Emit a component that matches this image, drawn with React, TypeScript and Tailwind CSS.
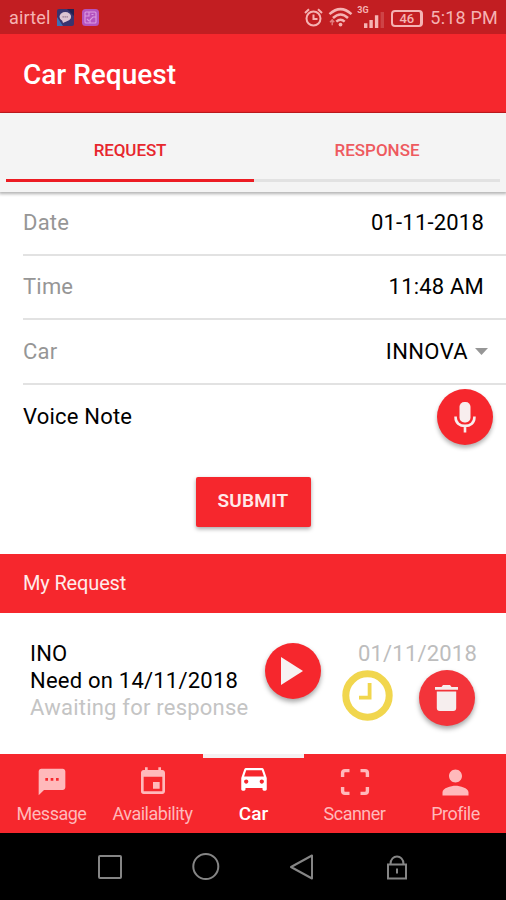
import React from "react";
import { MdTextsms, MdEvent, MdDirectionsCar, MdPerson } from "react-icons/md";

function StatusBar() {
  return (
    <div className="flex h-[34px] shrink-0 items-center bg-[#c21e22] pl-[9px] pr-[8px] text-[#f5b3b3]">
      <span className="pt-[2px] text-[18px] leading-[34px] tracking-[0.15px]">airtel</span>
      <svg className="ml-[7px] h-[17px] w-[17px]" viewBox="0 0 17 17">
        <rect width="17" height="17" rx="2" fill="#39346f" />
        <path d="M0 17V8l6 9z" fill="#3d70b5" />
        <path d="M10 0h7v7z" fill="#252251" />
        <ellipse cx="8.3" cy="7.8" rx="5.8" ry="4.7" fill="#ddc4d2" />
        <path d="M5 11l1 3 4-2z" fill="#ddc4d2" />
        <path d="M5.5 7.8h5.6" stroke="#94768f" strokeWidth="1.2" strokeDasharray="1.4 .6" />
      </svg>
      <svg className="ml-[8px] h-[17px] w-[17px]" viewBox="0 0 17 17">
        <rect width="17" height="17" rx="3.5" fill="#b453c0" />
        <g fill="none" stroke="#dc9be2" strokeWidth="1.1">
          <rect x="3" y="3" width="11" height="11" rx="1" />
          <path d="M3 7h4V3M8 14v-3l3-3h3M9.5 5.5h2M5 10l2 2" />
        </g>
      </svg>
      <div className="flex-1" />
      <svg className="h-[19px] w-[19px]" viewBox="0 0 19 19" fill="none" stroke="currentColor" strokeWidth="2">
        <circle cx="9.500" cy="10.500" r="7" />
        <path d="M1 5l4-3.800M18 5l-4-3.800M9.500 6.500v4.500h4" />
      </svg>
      <svg className="ml-[5px] h-[20px] w-[25px]" viewBox="0 0 25 20" fill="none" stroke="currentColor" strokeWidth="2.5">
        <path d="M1.5 7.2Q12.5-3 23.500 7.2M5 11Q12.5 4 20 11M8.3 14.6Q12.5 10.8 16.7 14.6" />
        <circle cx="12.5" cy="17.6" r="1.9" fill="currentColor" stroke="none" />
        <path d="M4.2 13v5.2M2 15.2l2.2-2.4 2 2.4" strokeWidth="1.4" opacity=".65" />
      </svg>
      <div className="ml-[4px] flex h-[23px] w-[29px] items-end">
        <span className="self-start text-[9px] font-bold leading-[9px]">3G</span>
        <svg className="-ml-[6px] mb-[1px] h-[16px] w-[22px] shrink-0" viewBox="0 0 22 17" preserveAspectRatio="none" fill="currentColor">
          <path d="M1 12h3.400v5H1zM6.400 8.500h3.400V17H6.400zM11.900 3.500h3.400V17h-3.400z" />
          <path d="M17.600 0H21v17h-3.400z" opacity=".25" />
        </svg>
      </div>
      <div className="ml-[5px] mt-[2px] flex h-[17px] w-[32px] items-center justify-center rounded-[4px] border-2 border-r-[3px] border-[#f5b3b3] text-[13px] font-medium leading-none">
        46
      </div>
      <span className="ml-[7px] pt-[2px] text-[18px] leading-[32px] tracking-[0.2px]">5:18 PM</span>
    </div>
  );
}

function Row({ label, children }: { label: string; children: React.ReactNode }) {
  return (
    <div className="ml-[23px] flex h-[64.5px] items-center justify-between border-b-2 border-[#e2e2e2] pr-[22px] text-[22px]">
      <span className="tracking-[0.2px] text-[#969696]">{label}</span>
      {children}
    </div>
  );
}

const tabs = [
  { label: "Message", icon: <MdTextsms className="h-[32px] w-[32px]" /> },
  { label: "Availability", icon: <MdEvent className="h-[32px] w-[32px]" /> },
  { label: "Car", icon: <MdDirectionsCar className="-mt-[5px] mb-[3px] h-[34px] w-[36px]" />, active: true },
  {
    label: "Scanner",
    icon: (
      <svg className="h-[32px] w-[32px]" viewBox="0 0 32 32" fill="none" stroke="currentColor" strokeWidth="3.4">
        <path d="M3.600 11V7Q3.600 4.600 6 4.600h4.500M21.500 4.600H26q2.400 0 2.400 2.400v4M28.400 21v4q0 2.400-2.400 2.400h-4.500M10.500 27.400H6Q3.600 27.400 3.600 25v-4" />
      </svg>
    ),
  },
  { label: "Profile", icon: <MdPerson className="-my-[3.5px] h-[39px] w-[39px]" /> },
];

export default function App() {
  return (
    <div className="flex h-[900px] w-[506px] flex-col overflow-hidden bg-white font-['Roboto','Noto_Sans',sans-serif] text-black">
      <StatusBar />
      <header className="flex h-[79px] shrink-0 items-center border-b border-[#d31b20] bg-[#f6272d] pl-[23px] pt-[3px]">
        <h1 className="text-[28px] font-medium leading-none text-white">Car Request</h1>
      </header>
      <div className="z-10 flex h-[79px] shrink-0 bg-[#f4f4f4] px-[6px] text-[17px] font-medium shadow-[0_1px_3px_1px_rgba(0,0,0,0.3)]">
        <div className="flex h-[69px] w-[248px] items-center justify-center border-b-[3px] border-[#ec1c23] pt-[10px] tracking-[-0.1px] text-[#e7262d]">REQUEST</div>
        <div className="flex h-[69px] flex-1 items-center justify-center border-b-[3px] border-[#e2e2e2] pt-[10px] text-[#ee5a5f]">RESPONSE</div>
      </div>
      <main className="-mt-[1px] h-[363px] shrink-0">
        <Row label="Date"><span className="tracking-[0.2px]">01-11-2018</span></Row>
        <Row label="Time"><span className="tracking-[0.2px]">11:48 AM</span></Row>
        <Row label="Car">
          <div className="-mr-[4px] flex items-center gap-[7px]">
            <span className="tracking-[0.4px]">INNOVA</span>
            <svg className="h-[7px] w-[13px]" viewBox="0 0 13 7"><path d="M0 0h13L6.500 7z" fill="#969696" /></svg>
          </div>
        </Row>
        <div className="flex h-[65px] items-center justify-between pb-[1px] pl-[23px] pr-[13.5px] text-[22px]">
          <span className="tracking-[0.2px]">Voice Note</span>
          <button className="flex h-[56px] w-[56px] items-center justify-center rounded-full bg-[#f6272d] text-[#f8eeee] shadow-[0_3px_4px_rgba(0,0,0,0.3)]">
            <svg className="h-[32px] w-[22px]" viewBox="0 0 22 32" fill="none" stroke="currentColor" strokeWidth="2.600">
              <rect x="5.500" y="1" width="11" height="20.500" rx="4.800" fill="currentColor" stroke="none" />
              <path d="M1.600 15.500v1c0 5.200 4 8.400 9.400 8.400s9.400-3.200 9.400-8.400v-1M11 24v7.500" />
            </svg>
          </button>
        </div>
        <div className="flex justify-center pt-[27px]">
          <button className="h-[50px] w-[115px] rounded-[2px] bg-[#f6272d] pb-[1px] text-[19px] font-semibold tracking-[0.2px] text-[#ffe9e9] shadow-[0_2px_4px_rgba(0,0,0,0.35)]">SUBMIT</button>
        </div>
      </main>
      <h2 className="flex h-[59px] shrink-0 items-center bg-[#f6272d] pb-[2px] pl-[23px] text-[20px] font-normal tracking-[-0.15px] text-[#ffebeb]">My Request</h2>
      <section className="flex h-[141px] shrink-0 pl-[30px]">
        <div className="w-[235px] whitespace-nowrap pt-[27px] text-[22px] leading-[27px] tracking-[0.22px]">
          <p>INO</p>
          <p>Need on 14/11/2018</p>
          <p className="text-[#c4c4c4]">Awaiting for response</p>
        </div>
        <button className="mt-[30px] flex h-[56px] w-[56px] items-center justify-center rounded-full bg-[#f6272d] text-[#f7f2f2] shadow-[0_3px_5px_rgba(0,0,0,0.35)]">
          <svg className="-ml-[2px] h-[28px] w-[22px]" viewBox="0 0 22 28"><path d="M0 0v28l22-14z" fill="currentColor" /></svg>
        </button>
        <div className="ml-[21px] w-[135px] pt-[27px]">
          <p className="text-right text-[22px] leading-[27px] tracking-[0.2px] text-[#bdbdbd]">01/11/2018</p>
          <div className="flex items-start justify-between pr-[2.5px] pt-[3px]">
            <svg className="h-[51px] w-[51px]" viewBox="0 0 51 51" fill="none" stroke="#f1d64d">
              <circle cx="25.500" cy="25.500" r="21.700" strokeWidth="7" />
              <path d="M27.600 13v14.700H17" strokeWidth="3.800" />
            </svg>
            <button className="flex h-[56px] w-[56px] items-center justify-center rounded-full bg-[#f3343a] text-[#f6eeee] shadow-[0_3px_5px_rgba(0,0,0,0.35)]">
              <svg className="h-[28px] w-[23px]" viewBox="0 0 23 28" fill="currentColor">
                <path d="M0 3h6.500l1.500-2h7l1.500 2H23v2.800H0zM1.800 7.400h19.400V24q0 3-3 3H4.800q-3 0-3-3z" />
              </svg>
            </button>
          </div>
        </div>
      </section>
      <nav className="grid h-[79px] shrink-0 grid-cols-5 bg-[#f6272d] pl-[1px]">
        {tabs.map((t) => (
          <div
            key={t.label}
            className={
              "flex flex-col items-center whitespace-nowrap border-t-[4px] pt-[8px] " +
              (t.active ? "border-[#f4f0f2] text-white" : "border-transparent text-[#ffb9bb]")
            }
          >
            {t.icon}
            <span className={t.active ? "mt-[4px] text-[19px] font-medium leading-[24px]" : "mt-[4px] text-[18px] leading-[24px] tracking-[-0.5px]"}>{t.label}</span>
          </div>
        ))}
      </nav>
      <footer className="h-[67px] shrink-0 bg-black">
        <svg className="h-[67px] w-[506px]" viewBox="0 -1 506 67" fill="none" stroke="#858585" strokeWidth="2">
          <rect x="99" y="22" width="22" height="22" rx="1" />
          <circle cx="205.800" cy="32.500" r="12.500" />
          <path d="M312 21.500v23L291 33z" strokeLinejoin="round" />
          <path d="M388 30.500h18v14h-18zM390.500 30c0-10 13-10 13 0" />
          <path d="M397 34.500v5" />
        </svg>
      </footer>
    </div>
  );
}
